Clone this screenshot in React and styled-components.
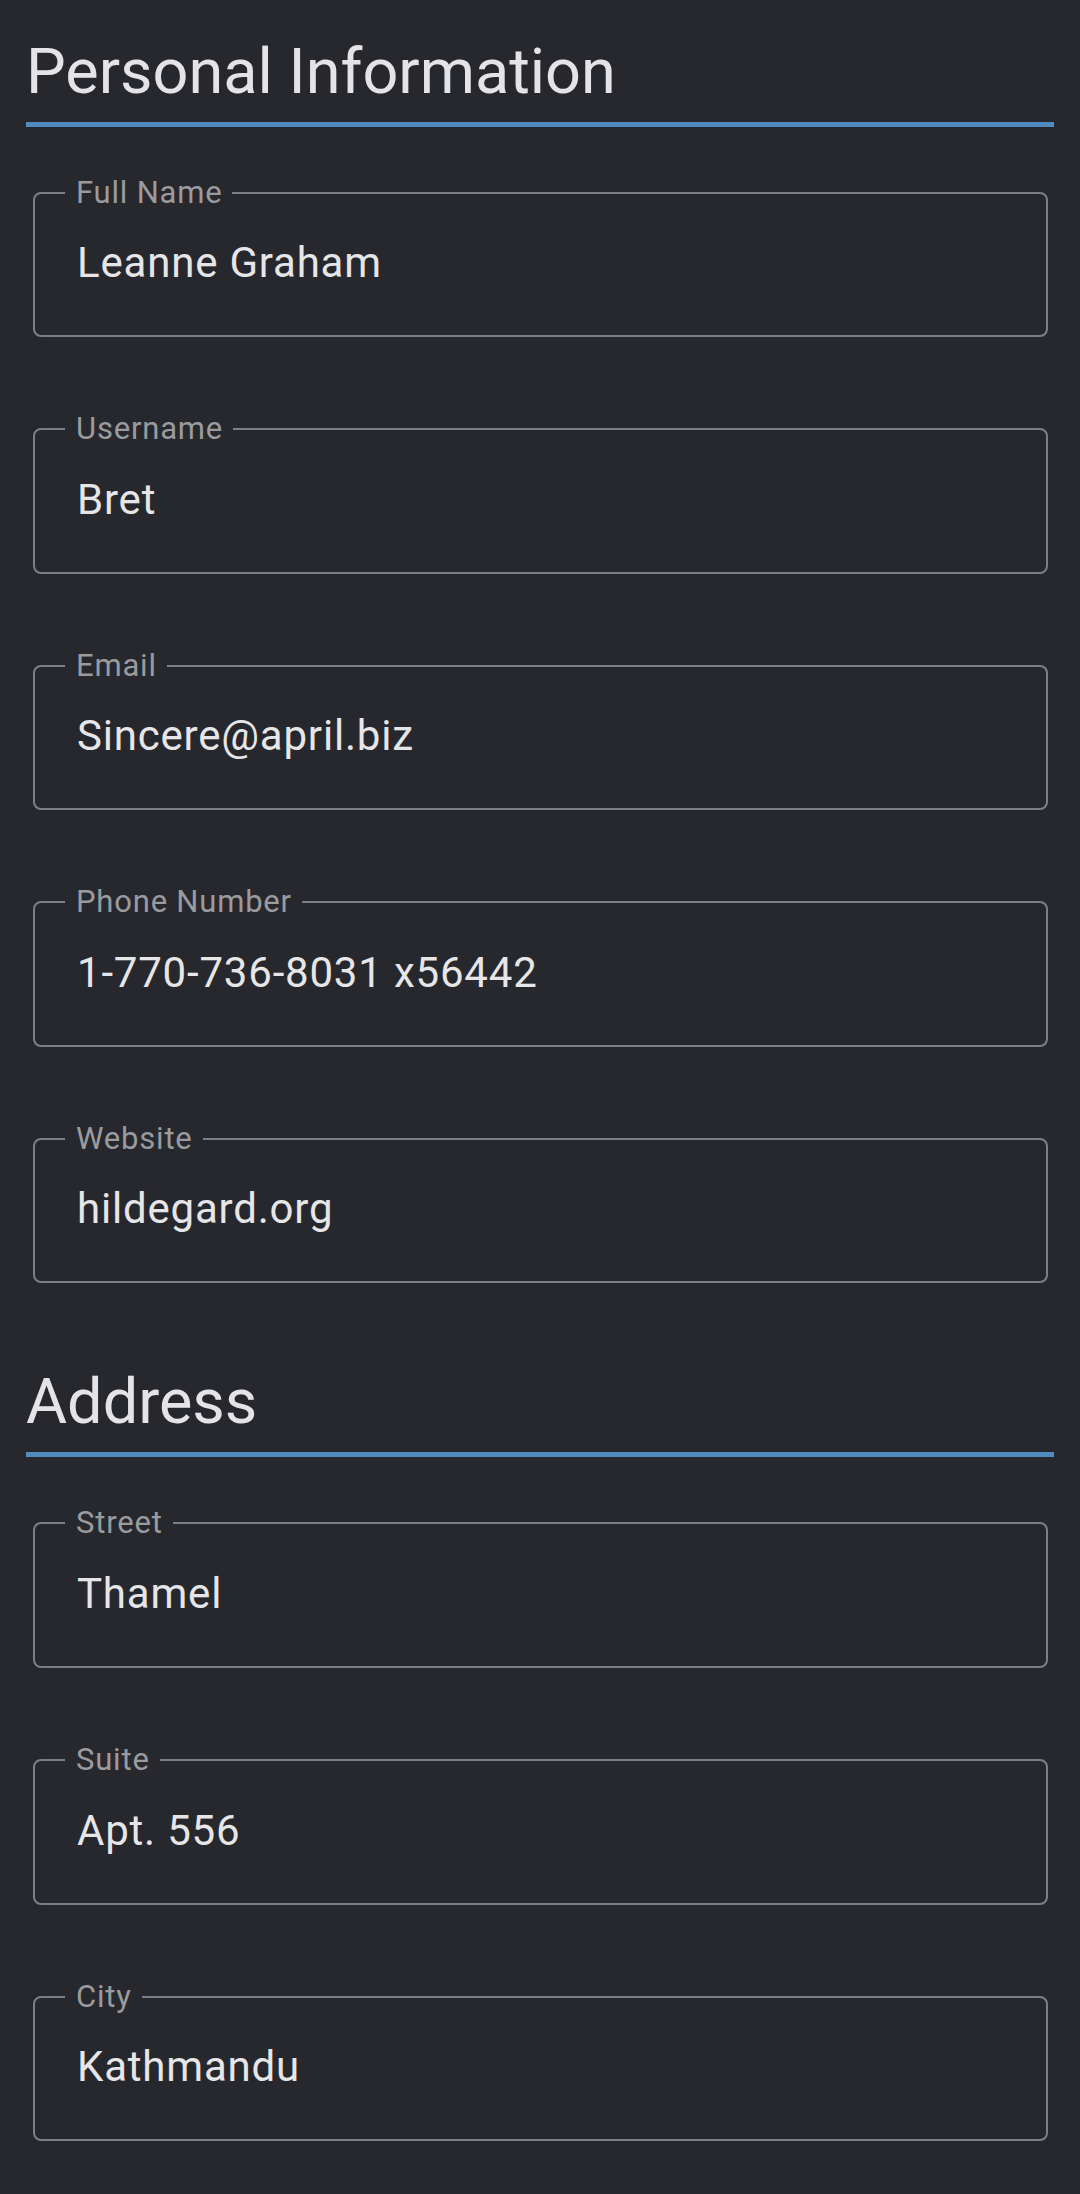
import React from "react";
import styled, { createGlobalStyle } from "styled-components";

const GlobalStyle = createGlobalStyle`
  html, body {
    margin: 0;
    padding: 0;
    background: #27282d;
  }
  body {
    font-family: Roboto, "Noto Sans", "Liberation Sans", sans-serif;
    -webkit-font-smoothing: antialiased;
  }
`;

const Page = styled.main`
  min-height: 2194px;
  box-sizing: border-box;
  background: #27282d;
  padding: 34.5px 26px 0;
`;

const Section = styled.section`
  display: flow-root;
  padding-bottom: 8px;
`;

const SectionTitle = styled.h2`
  margin: 0 0 48px;
  font-family: Roboto, "Noto Sans", sans-serif;
  font-size: 63px;
  font-weight: 400;
  line-height: 74px;
  color: #e4e4e6;
  padding-bottom: 13px;
  border-bottom: 5px solid #4f8ac1;
`;

const Field = styled.fieldset`
  margin: 0 6px 74px 7px;
  padding: 0 39px 0 42px;
  border: 2px solid #7e7f83;
  border-radius: 8px;
  min-width: 0;
`;

const Label = styled.legend`
  margin-left: -12px;
  padding: 0 10px 0 11px;
  font-family: Roboto, "Noto Sans", sans-serif;
  font-size: 31px;
  line-height: 36px;
  font-weight: 400;
  letter-spacing: 0.8px;
  color: #9a9b9f;
`;

const Value = styled.div`
  padding: 27.6px 0 47px;
  font-family: Roboto, "Noto Sans", sans-serif;
  font-size: 42px;
  line-height: 50px;
  letter-spacing: 0.8px;
  color: #e6e6e8;
`;

const personal = [
  ["Full Name", "Leanne Graham"],
  ["Username", "Bret"],
  ["Email", "Sincere@april.biz"],
  ["Phone Number", "1-770-736-8031 x56442"],
  ["Website", "hildegard.org"],
];

const address = [
  ["Street", "Thamel"],
  ["Suite", "Apt. 556"],
  ["City", "Kathmandu"],
];

function FieldBox({ label, value }) {
  return (
    <Field>
      <Label>{label}</Label>
      <Value>{value}</Value>
    </Field>
  );
}

export default function App() {
  return (
    <>
      <GlobalStyle />
      <Page>
        <Section>
          <SectionTitle>Personal Information</SectionTitle>
          {personal.map(([l, v]) => (
            <FieldBox key={l} label={l} value={v} />
          ))}
        </Section>
        <Section>
          <SectionTitle>Address</SectionTitle>
          {address.map(([l, v]) => (
            <FieldBox key={l} label={l} value={v} />
          ))}
        </Section>
      </Page>
    </>
  );
}
